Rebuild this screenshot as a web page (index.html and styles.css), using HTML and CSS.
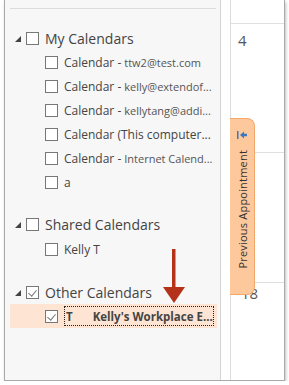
FILE: index.html
```html
<!DOCTYPE html>
<html lang="en">
<head>
    <meta charset="UTF-8">
    <title>Calendars</title>
    <link rel="stylesheet" href="styles.css">
</head>
<body>
    <div class="window">
        <div class="sidebar">
            <div class="topline"></div>

            <div class="group">
                <div class="group-head"><span class="tri"></span><span class="box"></span>My Calendars</div>
                <div class="item"><span class="box"></span>Calendar - <span class="sub">ttw2@test.com</span></div>
                <div class="item"><span class="box"></span>Calendar - <span class="sub">kelly@extendof...</span></div>
                <div class="item"><span class="box"></span>Calendar - <span class="sub">kellytang@addi...</span></div>
                <div class="item"><span class="box"></span>Calendar (This computer...</div>
                <div class="item"><span class="box"></span>Calendar - <span class="sub">Internet Calend...</span></div>
                <div class="item"><span class="box"></span>a</div>
            </div>

            <div class="group">
                <div class="group-head"><span class="tri"></span><span class="box"></span>Shared Calendars</div>
                <div class="item"><span class="box"></span>Kelly T</div>
            </div>

            <div class="group">
                <div class="group-head"><span class="tri"></span><span class="box checked"></span>Other Calendars</div>
                <div class="item selected"><span class="box checked"></span><span class="focus"><b>T</b><b class="name">Kelly's Workplace E...</b></span></div>
            </div>

            <svg class="arrow" width="24" height="56" viewBox="0 0 24 56">
                <rect x="10" y="0" width="3.5" height="44" fill="#b5321a"/>
                <path d="M1 38 L23 38 L12 54 Z" fill="#b5321a"/>
            </svg>
        </div>
        <div class="strip"></div>
        <div class="cal">
            <div class="cal-head"></div>
            <div class="day">4</div>
            <div class="day day-18">18</div>
        </div>

        <div class="tab">
            <svg width="12" height="10" viewBox="0 0 12 10">
                <rect x="1" y="1" width="1.5" height="8" fill="#3b78c0"/>
                <path d="M4 5 L8 1.5 L8 3.8 L11 3.8 L11 6.2 L8 6.2 L8 8.5 Z" fill="#3b78c0"/>
            </svg>
            <span class="tab-text">Previous Appointment</span>
        </div>
    </div>
</body>
</html>
```

FILE: styles.css
```css
* {
    margin: 0;
    padding: 0;
    box-sizing: border-box;
}
body {
    background: #fff;
    font-family: "Open Sans", "Noto Sans", sans-serif;
    color: #444;
}
.window {
    position: relative;
    margin-left: 4px;
    width: 281px;
    height: 381px;
    display: flex;
    border: 1px solid #a9a9a9;
    border-top: none;
    box-shadow: 1px 2px 3px rgba(0,0,0,0.25);
    background: #fff;
}
.sidebar {
    position: relative;
    width: 216px;
    background: #f7f7f7;
    border-right: 1px solid #d4d4d4;
    padding-top: 8px;
}
.topline {
    height: 1px;
    background: #dcdcdc;
    margin: 0 4px 0 5px;
    margin-bottom: 17px;
}
.group {
    margin-bottom: 18px;
}
.group-head {
    height: 24px;
    display: flex;
    align-items: center;
    font-size: 14px;
    color: #444;
    padding-left: 10px;
}
.tri {
    width: 0;
    height: 0;
    border-left: 6px solid transparent;
    border-bottom: 6px solid #444;
    margin-right: 5px;
    margin-top: 1px;
}
.box {
    display: inline-block;
    width: 13px;
    height: 13px;
    border: 1px solid #777;
    background: #fff;
    margin-right: 6px;
    flex-shrink: 0;
    position: relative;
}
.box.checked::after {
    content: "";
    position: absolute;
    left: 3px;
    top: 1px;
    width: 4px;
    height: 7px;
    border-right: 1px solid #777;
    border-bottom: 1px solid #777;
    transform: rotate(40deg);
}
.item {
    height: 24px;
    display: flex;
    align-items: center;
    padding-left: 40px;
    font-size: 12px;
    color: #444;
    white-space: nowrap;
}
.item .sub {
    font-size: 11px;
    color: #555;
    margin-left: 3px;
}
.group:nth-child(3) .item {
    height: 26px;
}
.item.selected {
    background: #fde4d3;
    margin: 0 3px 0 5px;
    padding-left: 35px;
}
.focus {
    display: flex;
    align-items: center;
    border: 1px dotted #222;
    height: 20px;
    width: 150px;
    padding-left: 1px;
    color: #444;
    font-size: 11.5px;
    overflow: hidden;
}
.focus .name {
    margin-left: 20px;
}
.arrow {
    position: absolute;
    left: 157px;
    top: 249px;
}
.strip {
    width: 10px;
    border-right: 1px solid #dcdcdc;
}
.cal {
    flex: 1;
    position: relative;
}
.cal-head {
    height: 24px;
    border-bottom: 1px solid #e0e0e0;
}
.day {
    font-size: 15px;
    color: #555;
    padding: 6px 0 0 7px;
    height: 129px;
    border-bottom: 1px solid #e0e0e0;
    line-height: 20px;
}
.day-18 {
    height: auto;
    border-bottom: none;
    padding-top: 0;
    margin-top: 129px;
    border-top: 1px solid #e0e0e0;
    padding-left: 10px;
}
.tab {
    position: absolute;
    left: 225px;
    top: 118px;
    width: 25px;
    height: 177px;
    background: #fdc89c;
    border: 1px solid #f3a86d;
    border-left: none;
    border-radius: 0 8px 8px 0;
    display: flex;
    flex-direction: column;
    align-items: center;
    padding-top: 11px;
}
.tab-text {
    writing-mode: vertical-rl;
    transform: rotate(180deg);
    font-size: 11px;
    letter-spacing: 0.2px;
    color: #333;
    margin-top: 10px;
}
```
